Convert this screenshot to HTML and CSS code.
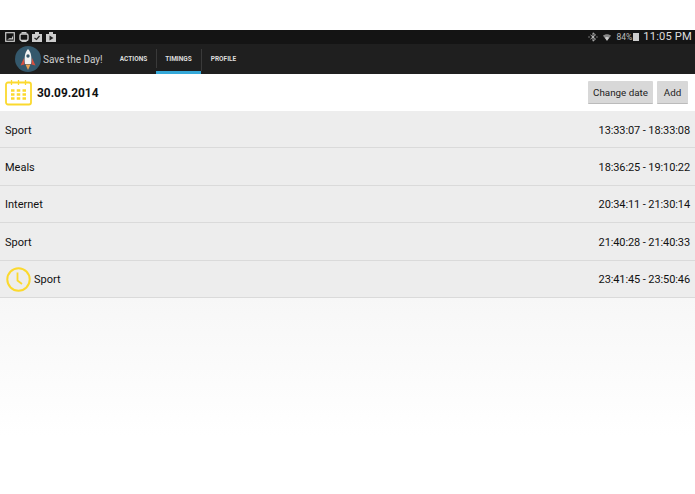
FILE: index.html
```html
<!DOCTYPE html>
<html lang="en">
<head>
<meta charset="utf-8">
<title>Save the Day!</title>
<link rel="stylesheet" href="styles.css">
</head>
<body>
<div class="top-gap"></div>
<div class="status">
  <div class="status-left">
    <svg class="si" viewBox="0 0 10 10"><rect x=".7" y=".7" width="8.6" height="8.6" fill="none" stroke="#ccc" stroke-width="1.2"/><path d="M2 7.5 5 6l1.500.5L8 3.500V7.500z" fill="#ccc"/></svg>
    <svg class="si" viewBox="0 0 10 10"><rect x="1" y="2" width="8" height="6.500" rx="1.500" fill="none" stroke="#ccc" stroke-width="1.400"/><rect x="2.500" y="0" width="5" height="1.500" fill="#ccc"/><rect x="2.500" y="9" width="5" height="1" fill="#ccc"/></svg>
    <svg class="si" viewBox="0 0 10 10"><path d="M0 2h10v8H0z" fill="#ccc"/><path d="M3 0h4v2H3z" fill="#ccc"/><path d="M2.500 6l2 1.500L7.500 4" fill="none" stroke="#222" stroke-width="1.200"/></svg>
    <svg class="si" viewBox="0 0 10 10"><path d="M0 2h10v8H0z" fill="#ccc"/><path d="M3 0h4v2H3z" fill="#ccc"/><path d="M3.500 3.500v5l4-2.500z" fill="#222"/></svg>
  </div>
  <div class="status-right">
    <svg class="bt" viewBox="0 0 12 12"><path d="M3 3.500l6 5L6 11V1l3 2.500-6 5" fill="none" stroke="#ccc" stroke-width="1"/><path d="M.5 6h1.500M10 6h1.500" stroke="#ccc"/></svg>
    <svg class="wifi" viewBox="0 0 12 12"><path d="M0 3.500C3 .5 9 .5 12 3.500L6 11z" fill="#888"/><path d="M2.800 6.500C4.500 5 7.500 5 9.200 6.500L6 11z" fill="#ccc"/></svg>
    <span class="pct">84%</span>
    <span class="battery"></span>
    <span class="clock">11:05 PM</span>
  </div>
</div>
<header class="action-bar">
  <div class="logo">
    <svg viewBox="0 0 26 26" width="26" height="26"><circle cx="13" cy="13" r="13" fill="#34586c"/><path d="M9 12 5.500 19.500 9.500 18.500zM17 12l3.500 7.500-4-1z" fill="#d8503f"/><path d="M13 3c3 3 4 8 3 15h-6C9 11 10 6 13 3z" fill="#f2f2f2"/><circle cx="13" cy="10" r="1.700" fill="#34586c"/><path d="M10.500 18.500h5L13 24z" fill="#e8a050"/></svg>
  </div>
  <span class="app-title">Save the Day!</span>
  <nav class="tabs">
    <a class="tab">ACTIONS</a>
    <a class="tab active">TIMINGS</a>
    <a class="tab">PROFILE</a>
  </nav>
</header>
<section class="date-row">
  <svg class="cal" viewBox="0 0 27 27" width="27" height="27">
    <rect x="1" y="3.500" width="25" height="22" rx="2" fill="none" stroke="#fbd92e" stroke-width="1.800"/>
    <path d="M6.500 1v5M13.500 1v5M20.500 1v5" stroke="#fbd92e" stroke-width="1.300" fill="none"/>
    <path d="M6 11.500h15M6 15.500h15M6 19.500h15" stroke="#fbd92e" stroke-width="2.400" stroke-dasharray="3.500 2.250" fill="none"/>
  </svg>
  <span class="date">30.09.2014</span>
  <div class="buttons">
    <button class="btn">Change date</button>
    <button class="btn btn-add">Add</button>
  </div>
</section>
<main class="list">
  <div class="row"><span>Sport</span><span class="time">13:33:07 - 18:33:08</span></div>
  <div class="row"><span>Meals</span><span class="time">18:36:25 - 19:10:22</span></div>
  <div class="row"><span>Internet</span><span class="time">20:34:11 - 21:30:14</span></div>
  <div class="row"><span>Sport</span><span class="time">21:40:28 - 21:40:33</span></div>
  <div class="row">
    <span class="with-icon">
      <svg viewBox="0 0 25 25" width="25" height="25"><circle cx="12.500" cy="12.500" r="11.200" fill="none" stroke="#fbd92e" stroke-width="2"/><path d="M11.500 5.500v8l4.500 3.500" fill="none" stroke="#fbd92e" stroke-width="1.800"/></svg>
      Sport
    </span>
    <span class="time">23:41:45 - 23:50:46</span>
  </div>
</main>
<div class="fade"></div>
</body>
</html>
```
FILE: styles.css
```css
* { box-sizing: border-box; }
html, body { margin: 0; padding: 0; height: 494px; overflow: hidden; background: #fff; }
body { font-family: Roboto, "Liberation Sans", sans-serif; display: flex; flex-direction: column; }
.top-gap { height: 30px; background: #fff; flex: none; }
.status { height: 14px; flex: none; background: #141414; display: flex; justify-content: space-between; align-items: center; padding: 0 3px 0 5px; }
.status-left { display: flex; gap: 3px; }
.si { width: 10px; height: 10px; display: block; margin-right: 0; }
.status-left { gap: 3.500px; }
.status-right { display: flex; align-items: center; color: #ddd; }
.bt { width: 10px; height: 10px; margin-right: 5px; }
.wifi { width: 8px; height: 9px; margin-right: 6px; }
.pct { font-size: 8.500px; margin-right: 1px; color: #bbb; }
.battery { width: 6px; height: 8px; background: #ccc; margin-right: 4px; }
.clock { font-size: 11.200px; line-height: 14px; letter-spacing: .15px; }
.action-bar { height: 30px; flex: none; background: #1f1f1f; display: flex; align-items: center; padding-left: 15px; }
.logo { width: 26px; height: 26px; margin-right: 2px; flex: none; }
.app-title { color: #ccc; font-size: 10px; width: 65px; flex: none; margin-top: 1px; }
.tabs { display: flex; height: 30px; margin-left: 3px; }
.tab { width: 45px; color: #ddd; font-size: 6.500px; font-weight: 700; display: flex; align-items: center; justify-content: center; position: relative; }
.tab + .tab::before { content: ""; position: absolute; left: 0; top: 5px; bottom: 3px; width: 1px; background: #3a3a3a; }
.tab.active { border-bottom: 3px solid #35a8d8; padding-top: 3px; }
.date-row { height: 37px; flex: none; background: #fff; display: flex; align-items: center; padding: 0 7px 0 5px; }
.cal { flex: none; }
.date { font-size: 11.900px; font-weight: 700; color: #111; margin-left: 5px; }
.buttons { margin-left: auto; display: flex; gap: 4px; }
.btn { height: 23px; padding: 0 5px; border: 0; border-bottom: 1px solid #bbb; border-radius: 1px; background: #d8d8d8; color: #222; font: 400 9.800px Roboto, "Liberation Sans", sans-serif; }
.btn-add { width: 31px; padding: 0; }
.list { flex: none; }
.row { height: 37.400px; padding: 2px 5px 0; background: #ededed; border-bottom: 1px solid #dadada; display: flex; justify-content: space-between; align-items: center; font-size: 11px; color: #111; }
.time { letter-spacing: -.1px; }
.with-icon { display: flex; align-items: center; gap: 3px; padding-left: 1px; margin-top: -1px; }
.fade { flex: 1; background: linear-gradient(#f7f7f7, #fff 70%); }
```
